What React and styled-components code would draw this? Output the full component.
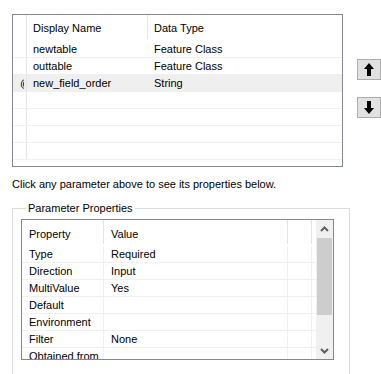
import React from "react";
import styled, { createGlobalStyle } from "styled-components";

const GlobalStyle = createGlobalStyle`
  body {
    margin: 0;
    background: #ffffff;
    font-family: "Liberation Sans", Arial, sans-serif;
    font-size: 11px;
    color: #000000;
  }
`;

const params = [
  { mark: "", name: "newtable", type: "Feature Class" },
  { mark: "", name: "outtable", type: "Feature Class" },
  { mark: "@", name: "new_field_order", type: "String", selected: true },
  { mark: "", name: "", type: "" },
  { mark: "", name: "", type: "" },
  { mark: "", name: "", type: "" },
  { mark: "", name: "", type: "" },
];

const props = [
  ["Type", "Required"],
  ["Direction", "Input"],
  ["MultiValue", "Yes"],
  ["Default", ""],
  ["Environment", ""],
  ["Filter", "None"],
  ["Obtained from", ""],
];

const UpArrow = () => (
  <svg width="10" height="13" viewBox="0 0 10 13">
    <path d="M5 0 L10 6 L7 6 L7 13 L3 13 L3 6 L0 6 Z" fill="#000" />
  </svg>
);

const DownArrow = () => (
  <svg width="10" height="13" viewBox="0 0 10 13">
    <path d="M5 13 L10 7 L7 7 L7 0 L3 0 L3 7 L0 7 Z" fill="#000" />
  </svg>
);

const Chevron = ({ down }) => (
  <svg width="9" height="6" viewBox="0 0 9 6">
    <path
      d={down ? "M1 1 L4.5 4.5 L8 1" : "M1 5 L4.5 1.5 L8 5"}
      stroke="#606060"
      strokeWidth="2"
      fill="none"
    />
  </svg>
);

export default function App() {
  return (
    <Page>
      <GlobalStyle />
      <TopArea>
        <ParamGrid>
          <HeadRow>
            <MarkCell head />
            <HeadCell width={121} line>
              Display Name
            </HeadCell>
            <HeadCell width={197} line>
              Data Type
            </HeadCell>
            <HeadCell />
          </HeadRow>
          {params.map((p, i) => (
            <DataRow key={i} selected={p.selected}>
              <MarkCell>
                <MarkGlyph>{p.mark}</MarkGlyph>
              </MarkCell>
              <Cell width={121}>{p.name}</Cell>
              <Cell width={197}>{p.type}</Cell>
              <Cell />
            </DataRow>
          ))}
        </ParamGrid>
        <MoveButtons>
          <MoveButton>
            <UpArrow />
          </MoveButton>
          <MoveButton>
            <DownArrow />
          </MoveButton>
        </MoveButtons>
      </TopArea>
      <Hint>Click any parameter above to see its properties below.</Hint>
      <Group>
        <Legend>Parameter Properties</Legend>
        <PropGrid>
          <PropBody>
            <PropHead>
              <PropHeadCell width={82} line>
                Property
              </PropHeadCell>
              <PropHeadCell width={184} line>
                Value
              </PropHeadCell>
              <PropHeadCell width={24} line />
            </PropHead>
            {props.map(([k, v]) => (
              <PropRow key={k}>
                <PropCell width={82}>{k}</PropCell>
                <PropCell width={184}>{v}</PropCell>
                <PropCell width={24} />
              </PropRow>
            ))}
          </PropBody>
          <ScrollBar>
            <ScrollArrow>
              <Chevron />
            </ScrollArrow>
            <Track>
              <Thumb />
            </Track>
            <ScrollArrow>
              <Chevron down />
            </ScrollArrow>
          </ScrollBar>
        </PropGrid>
      </Group>
    </Page>
  );
}

const Page = styled.div`
  width: 381px;
  height: 374px;
  overflow: hidden;
  padding: 14px 0 0 12px;
  box-sizing: border-box;
`;

const TopArea = styled.div`
  display: flex;
  align-items: flex-start;
`;

const ParamGrid = styled.div`
  width: 336px;
  height: 153px;
  box-sizing: border-box;
  border: 1px solid #828790;
  overflow: hidden;
`;

const HeadRow = styled.div`
  display: flex;
  height: 26px;
`;

const HeadCell = styled.div`
  width: ${(p) => (p.width ? `${p.width}px` : "auto")};
  flex: ${(p) => (p.width ? "none" : "1")};
  box-sizing: border-box;
  padding: 6px 0 0 6px;
  line-height: 14px;
  border-right: ${(p) => (p.line ? "1px solid #e5e5e5" : "none")};
  margin-bottom: 2px;
  white-space: nowrap;
`;

const MarkCell = styled.div`
  width: 14px;
  flex: none;
  box-sizing: border-box;
  border-right: 1px solid #e5e5e5;
  padding-left: 7px;
  overflow: hidden;
  line-height: 17px;
`;

const MarkGlyph = styled.div`
  width: 4px;
  overflow: hidden;
  white-space: nowrap;
`;

const DataRow = styled.div`
  display: flex;
  height: 17px;
  box-sizing: border-box;
  border-bottom: 1px solid #f0f0f0;
  background: ${(p) => (p.selected ? "#efefef" : "transparent")};
`;

const Cell = styled.div`
  width: ${(p) => (p.width ? `${p.width}px` : "auto")};
  flex: ${(p) => (p.width ? "none" : "1")};
  box-sizing: border-box;
  padding-left: 6px;
  line-height: 17px;
  white-space: nowrap;
`;

const MoveButtons = styled.div`
  display: flex;
  flex-direction: column;
  gap: 17px;
  margin: 45px 0 0 14px;
`;

const MoveButton = styled.div`
  width: 24px;
  height: 21px;
  box-sizing: border-box;
  background: #e1e1e1;
  border: 1px solid #adadad;
  display: flex;
  align-items: center;
  padding-left: 6px;
`;

const Hint = styled.div`
  margin-top: 10px;
  line-height: 15px;
  white-space: nowrap;
`;

const Group = styled.fieldset`
  width: 338px;
  margin: 9px 0 0 0;
  box-sizing: border-box;
  border: 1px solid #dcdcdc;
  padding: 4px 15px 20px 8px;
  min-width: 0;
`;

const Legend = styled.legend`
  padding: 0 2px;
  margin-left: 5px;
  line-height: 14px;
`;

const PropGrid = styled.div`
  width: 313px;
  height: 141px;
  box-sizing: border-box;
  border: 1px solid #828790;
  display: flex;
  overflow: hidden;
`;

const PropBody = styled.div`
  flex: 1;
  overflow: hidden;
`;

const PropHead = styled.div`
  display: flex;
  height: 26px;
`;

const PropHeadCell = styled(HeadCell)`
  padding-left: 7px;
  padding-top: 7px;
`;

const PropRow = styled.div`
  display: flex;
  height: 17px;
  box-sizing: border-box;
  border-bottom: 1px solid #f0f0f0;
`;

const PropCell = styled(Cell)`
  padding-left: 7px;
  border-right: 1px solid #f0f0f0;
`;

const ScrollBar = styled.div`
  width: 17px;
  flex: none;
  background: #f0f0f0;
  display: flex;
  flex-direction: column;
`;

const ScrollArrow = styled.div`
  height: 17px;
  display: flex;
  align-items: center;
  justify-content: center;
`;

const Track = styled.div`
  flex: 1;
`;

const Thumb = styled.div`
  height: 77px;
  margin: 1px 1px 0 1px;
  background: #cdcdcd;
`;
